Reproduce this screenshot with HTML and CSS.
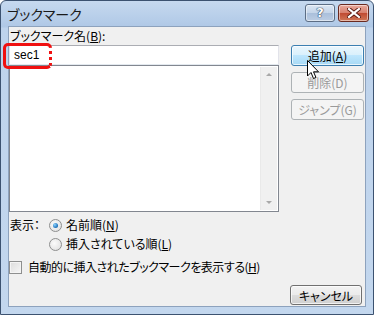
FILE: index.html
```html
<!DOCTYPE html>
<html lang="ja">
<head>
    <meta charset="UTF-8">
    <title>ブックマーク</title>
    <link rel="stylesheet" href="styles.css">
</head>
<body>
    <div class="window">
        <div class="titlebar">
            <span class="title">ブックマーク</span>
            <div class="caption-buttons">
                <span class="cap help">?</span>
                <span class="cap close">
                    <svg width="14" height="10" viewBox="0 0 14 10">
                        <path d="M2 1 L12 9 M12 1 L2 9" stroke="#5a1a12" stroke-width="4" stroke-linecap="square"/>
                        <path d="M2 1 L12 9 M12 1 L2 9" stroke="#fff" stroke-width="2.2" stroke-linecap="square"/>
                    </svg>
                </span>
            </div>
        </div>

        <div class="client">
            <div class="top-row">
                <div class="name-col">
                    <div class="label">ブックマーク名(<u>B</u>):</div>
                    <div class="edit">sec1</div>
                    <div class="list">
                        <div class="scrollbar">
                            <span class="arrow up"></span>
                            <span class="arrow down"></span>
                        </div>
                    </div>
                </div>
                <div class="side-buttons">
                    <button class="btn hot">追加(<u>A</u>)</button>
                    <button class="btn" disabled>削除(D)</button>
                    <button class="btn" disabled>ジャンプ(G)</button>
                </div>
            </div>

            <div class="sort-row">
                <span class="sort-label">表示：</span>
                <div class="radios">
                    <div class="option"><span class="radio checked"></span><span>名前順(<u>N</u>)</span></div>
                    <div class="option"><span class="radio"></span><span>挿入されている順(<u>L</u>)</span></div>
                </div>
            </div>

            <div class="option check-row"><span class="checkbox"></span><span>自動的に挿入されたブックマークを表示する(<u>H</u>)</span></div>

            <div class="footer">
                <button class="btn">キャンセル</button>
            </div>
        </div>

        <div class="highlight"></div>
        <svg class="cursor" width="13" height="20" viewBox="0 0 13 20">
            <path d="M0.5 0.5 L0.5 16 L4 12.5 L6.5 18.5 L9 17.5 L6.5 11.8 L11.5 11.8 Z" fill="#fff" stroke="#000" stroke-width="1"/>
        </svg>
    </div>
</body>
</html>
```

FILE: styles.css
```css
body {
    margin: 0;
    font-family: "Noto Sans CJK JP", sans-serif;
    font-size: 12px;
    color: #000;
}

.window {
    position: relative;
    width: 374px;
    height: 315px;
    box-sizing: border-box;
    border: 1px solid #3c5270;
    border-radius: 6px 6px 0 0;
    background: linear-gradient(180deg, #c6d9ef 0px, #afc8e6 26px, #bed3ec 27px, #c3d7ee 100%);
    display: flex;
    flex-direction: column;
    overflow: hidden;
}

.titlebar {
    height: 25px;
    display: flex;
    align-items: center;
    justify-content: space-between;
    padding: 0 4px 0 6px;
}

.title {
    font-size: 14px;
    font-feature-settings: "palt";
    color: #1a1a1a;
    margin-top: 1px;
}

.caption-buttons {
    display: flex;
    gap: 3px;
    margin-top: -2px;
}

.cap {
    height: 16px;
    border: 1px solid #5c6d84;
    border-radius: 3px;
    display: flex;
    align-items: center;
    justify-content: center;
    box-shadow: inset 0 0 0 1px rgba(255, 255, 255, 0.5);
}

.help {
    width: 28px;
    background: linear-gradient(180deg, #dbe6f3 0%, #c4d4e8 50%, #aabfdb 51%, #bccde3 100%);
    font-family: "DejaVu Sans", sans-serif;
    font-weight: bold;
    font-size: 13px;
    color: #fff;
    text-shadow: 0 0 1px #2a3c58, 0 0 1px #2a3c58, 0 0 1px #2a3c58;
}

.close {
    width: 29px;
    border-color: #6a2a20;
    background: linear-gradient(180deg, #e9a99c 0%, #d7806e 50%, #c04a32 51%, #d07858 100%);
}

.client {
    flex: 1;
    margin: 0 7px 7px;
    border: 1px solid #8da2bd;
    background: #f0f0f0;
    display: flex;
    flex-direction: column;
}

.top-row {
    display: flex;
    gap: 12px;
}

.name-col {
    width: 270px;
    display: flex;
    flex-direction: column;
}

.label {
    line-height: 14px;
    margin: 2px 0 2px 1px;
    font-feature-settings: "palt";
}

.edit {
    height: 18px;
    border: 1px solid #7a7a7a;
    border-color: #abadb3 #e2e3ea #e3e9ef #e2e3ea;
    background: #fff;
    font-family: "Liberation Sans", sans-serif;
    font-size: 12px;
    line-height: 18px;
    padding-left: 4px;
}

.list {
    height: 143px;
    border: 1px solid #828790;
    background: #fff;
    display: flex;
    justify-content: flex-end;
    padding: 1px;
}

.scrollbar {
    width: 17px;
    background: #f0f0f0;
    border-left: 1px solid #e9e9e9;
    display: flex;
    flex-direction: column;
    justify-content: space-between;
    align-items: center;
    padding: 6px 0;
    box-sizing: border-box;
}

.arrow {
    width: 0;
    height: 0;
    border-left: 3px solid transparent;
    border-right: 3px solid transparent;
}

.arrow.up {
    border-bottom: 3px solid #a8a8a8;
}

.arrow.down {
    border-top: 3px solid #a8a8a8;
}

.side-buttons {
    display: flex;
    flex-direction: column;
    gap: 6px;
    padding-top: 18px;
}

.btn {
    width: 73px;
    height: 21px;
    font-family: "Noto Sans CJK JP", sans-serif;
    font-size: 12px;
    font-feature-settings: "palt";
    line-height: 17px;
    padding: 0;
    color: #000;
    border: 1px solid #707070;
    border-radius: 3px;
    background: linear-gradient(180deg, #f2f2f2 0%, #ebebeb 49%, #dddddd 50%, #cfcfcf 100%);
    box-shadow: inset 0 0 0 1px rgba(255, 255, 255, 0.7);
}

.btn.hot {
    border-color: #3c7fb1;
    background: linear-gradient(180deg, #eaf6fd 0%, #d9f0fc 49%, #bee6fd 50%, #a7d9f5 100%);
}

.btn:disabled {
    color: #9a9a9a;
    border-color: #adb2b5;
    background: #f4f4f4;
    box-shadow: none;
}

.sort-row {
    display: flex;
    margin-top: 5px;
    margin-left: 1px;
}

.sort-label {
    width: 39px;
    line-height: 16px;
    font-feature-settings: "palt";
}

.radios {
    display: flex;
    flex-direction: column;
    gap: 3px;
}

.option {
    display: flex;
    align-items: center;
    gap: 4px;
    line-height: 16px;
    font-feature-settings: "palt";
}

.radio {
    width: 11px;
    height: 11px;
    border: 1px solid #8e8f8f;
    border-radius: 50%;
    background: radial-gradient(circle at 40% 40%, #fbfbfb 0%, #dcdcdc 100%);
    display: flex;
    align-items: center;
    justify-content: center;
}

.radio.checked::after {
    content: "";
    width: 5px;
    height: 5px;
    border-radius: 50%;
    background: radial-gradient(circle at 35% 35%, #8fd4ff 0%, #1b6fb8 70%, #0c4e8c 100%);
}

.check-row {
    margin-top: 7px;
    margin-left: 0;
    letter-spacing: -0.5px;
}

.checkbox {
    width: 11px;
    height: 11px;
    border: 1px solid #8e8f8f;
    background: linear-gradient(135deg, #dcdcdc 0%, #f6f6f6 100%);
    box-shadow: inset 0 0 0 1px #f4f4f4;
    margin-right: 2px;
}

.footer {
    margin-top: auto;
    display: flex;
    justify-content: flex-end;
    padding: 0 3px 1px 0;
}

.footer .btn {
    width: 72px;
    height: 20px;
}

.highlight {
    position: absolute;
    left: 2px;
    top: 42px;
    width: 43px;
    height: 20px;
    border: 3px solid #f01010;
    border-right-style: dotted;
    border-radius: 5px;
}

.cursor {
    position: absolute;
    left: 306px;
    top: 59px;
}
```
